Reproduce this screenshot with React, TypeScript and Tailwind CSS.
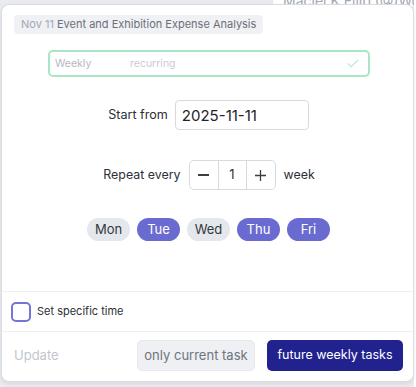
import { useState } from 'react'

const days = ['Mon', 'Tue', 'Wed', 'Thu', 'Fri']

export default function App() {
  const [selected, setSelected] = useState<string[]>(['Tue', 'Thu', 'Fri'])
  const [count, setCount] = useState(1)

  const toggle = (d: string) =>
    setSelected((s) => (s.includes(d) ? s.filter((x) => x !== d) : [...s, d]))

  return (
    <div className="relative w-[416px] h-[387px] overflow-hidden bg-[#e9ebee] font-['Inter',sans-serif]">
      {/* page behind the dialog */}
      <div className="absolute left-[272px] top-0 h-[6px] w-[142px] border-l border-[#e3e6ea] bg-white" />
      <div className="absolute left-[283px] top-[-10px] text-[14px] text-[#a3a8b0] whitespace-nowrap">
        Maciej K Filip (@)Work|
      </div>
      <div className="absolute left-[414px] top-0 h-full w-[2px] bg-white" />

      {/* dialog */}
      <div className="absolute left-[1px] top-[4px] flex h-[378px] w-[413px] flex-col rounded-lg border border-[#d9dde3] bg-white shadow-[0_2px_4px_rgba(0,0,0,0.08)]">
        <div className="flex h-[286px] flex-col px-3 pt-[10px]">
          <div className="self-start rounded bg-[#eff1f4] px-[7px] py-[2px] text-[11px] leading-[15px]">
            <span className="text-[#a3a8b0]">Nov 11 </span>
            <span className="text-[#6b7078]">Event and Exhibition Expense Analysis</span>
          </div>

          <div className="mt-4 ml-[34px] flex h-[27px] w-[322px] items-center rounded-[5px] border-2 border-[#a9e6c5] px-[5px] text-[10.5px] text-[#b4b8be]">
            <span className="w-[75px]">Weekly</span>
            <span className="text-[#c9ccd1]">recurring</span>
            <svg className="ml-auto mr-[4px]" width="12" height="9" viewBox="0 0 12 9" fill="none">
              <path d="M1 4.5 L4.3 7.6 L11 1" stroke="#b9ead0" strokeWidth="1.3" />
            </svg>
          </div>

          <div className="mt-[23px] flex items-center justify-center gap-[7px] pl-[2px]">
            <span className="text-[12.6px] text-[#2b2f36]">Start from</span>
            <input
              defaultValue="2025-11-11"
              className="h-[30px] w-[134px] rounded border border-[#d7dbe0] px-[6px] text-[15px] text-[#1f2329] outline-none"
            />
          </div>

          <div className="mt-[30px] flex items-center justify-center pl-[3px] text-[12.4px] text-[#2b2f36]">
            <span>Repeat every</span>
            <div className="ml-[8px] flex h-[30px] items-stretch rounded-[5px] border border-[#d7dbe0]">
              <button
                onClick={() => setCount((c) => Math.max(1, c - 1))}
                className="flex w-[29px] items-center justify-center border-r border-[#d7dbe0]"
              >
                <span className="block h-[1.3px] w-[11px] bg-[#3a3e45]" />
              </button>
              <div className="flex w-[27px] items-center justify-center text-[13px]">{count}</div>
              <button
                onClick={() => setCount((c) => c + 1)}
                className="flex w-[29px] items-center justify-center border-l border-[#d7dbe0]"
              >
                <svg width="11" height="11" viewBox="0 0 11 11">
                  <path d="M5.5 0 V11 M0 5.5 H11" stroke="#3a3e45" strokeWidth="1.3" />
                </svg>
              </button>
            </div>
            <span className="ml-[8px]">week</span>
          </div>

          <div className="mt-[28px] flex items-center justify-center gap-[7px] pl-[2px]">
            {days.map((d) => {
              const on = selected.includes(d)
              return (
                <button
                  key={d}
                  onClick={() => toggle(d)}
                  className={
                    on
                      ? 'h-[23px] w-[43px] rounded-full bg-[#6a6bd0] text-[13px] text-white'
                      : 'h-[23px] w-[43px] rounded-full bg-[#e4e7eb] text-[13px] text-[#33373d]'
                  }
                >
                  {d}
                </button>
              )
            })}
          </div>
        </div>

        <div className="flex h-[40px] items-center gap-[6px] border-t border-[#eceef1] px-[9px]">
          <span className="h-[20px] w-[20px] rounded-[5px] border-2 border-[#7575d8] bg-white" />
          <span className="text-[11px] text-[#2b2f36]">Set specific time</span>
        </div>

        <div className="flex flex-1 items-center border-t border-[#eceef1] pl-3 pr-[10px] pb-[2px]">
          <span className="text-[13px] text-[#c3c7cc]">Update</span>
          <button className="ml-auto h-[31px] w-[118px] rounded-[5px] border border-[#e6e9ed] bg-[#eef0f3] text-[13px] text-[#6f747b]">
            only current task
          </button>
          <button className="ml-[12px] h-[31px] w-[136px] rounded-[5px] bg-[#22228f] text-[12.5px] text-white">
            future weekly tasks
          </button>
        </div>
      </div>
    </div>
  )
}
